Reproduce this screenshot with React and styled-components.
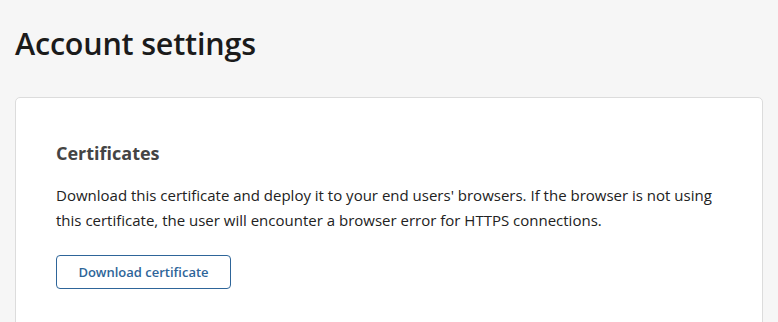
import React from "react";
import styled, { createGlobalStyle } from "styled-components";

const GlobalStyle = createGlobalStyle`
  html, body {
    margin: 0;
    padding: 0;
    background: #f6f6f6;
    font-family: "Open Sans", "Noto Sans", sans-serif;
    color: #1b1b1b;
    overflow: hidden;
  }
`;

const Page = styled.div`
  padding: 19px 15px 0 15px;
`;

const Title = styled.h1`
  margin: 0 0 30px 0;
  font-size: 30.5px;
  font-weight: 600;
  line-height: 48px;
  color: #1b1b1b;
  letter-spacing: -0.2px;
`;

const Card = styled.section`
  background: #fff;
  border: 1px solid #dcdcdc;
  border-radius: 5px;
  padding: 42px 40px 0 40px;
  height: 240px;
`;

const SectionTitle = styled.h2`
  margin: 0 0 17px 0;
  font-size: 18px;
  font-weight: 700;
  line-height: 26px;
  color: #444;
`;

const Text = styled.p`
  margin: 0 0 22px 0;
  font-size: 15px;
  line-height: 25px;
  color: #222;
`;

const Button = styled.button`
  font-family: inherit;
  font-size: 13px;
  font-weight: 600;
  color: #2e6599;
  background: #fff;
  border: 1px solid #2e6599;
  border-radius: 4px;
  height: 34px;
  width: 175px;
  cursor: pointer;
`;

export default function App() {
  return (
    <>
      <GlobalStyle />
      <Page>
        <Title>Account settings</Title>
        <Card>
          <SectionTitle>Certificates</SectionTitle>
          <Text>
            Download this certificate and deploy it to your end users' browsers. If the browser is not using
            this certificate, the user will encounter a browser error for HTTPS connections.
          </Text>
          <Button>Download certificate</Button>
        </Card>
      </Page>
    </>
  );
}
